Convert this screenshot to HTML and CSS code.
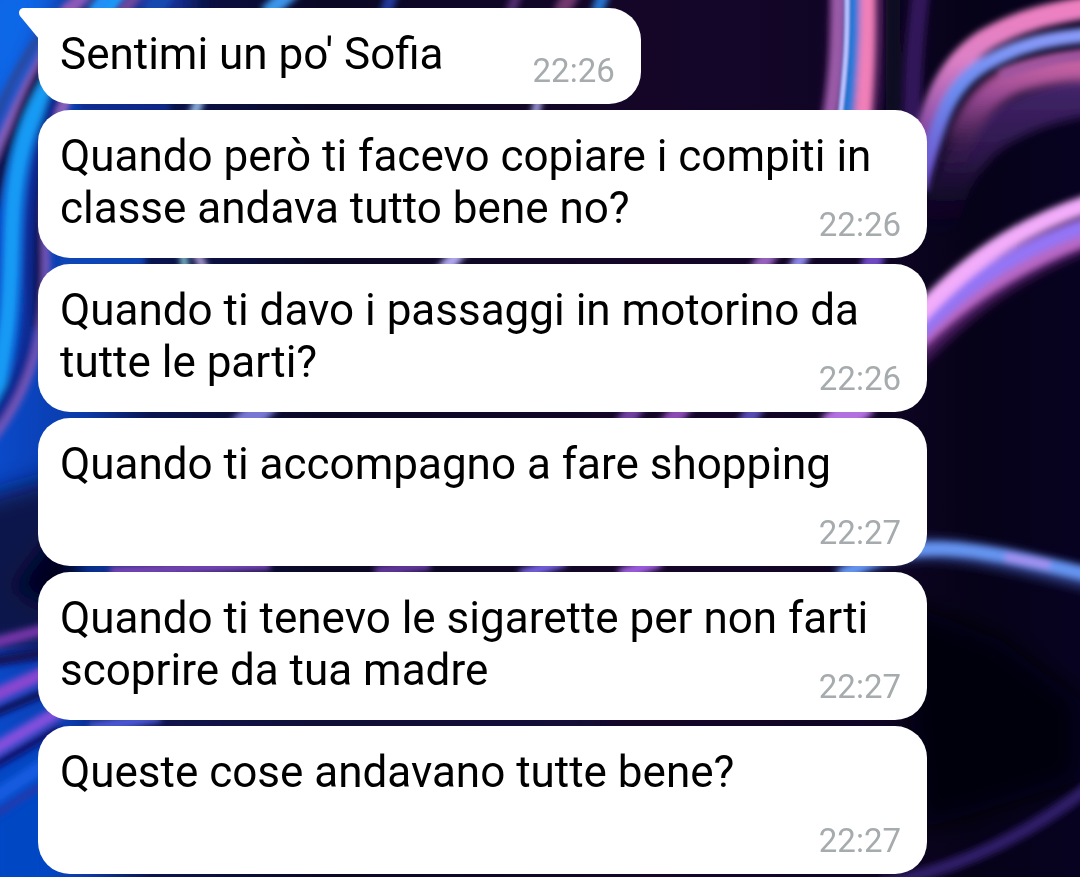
FILE: index.html
```html
<!DOCTYPE html>
<html lang="it">
<head>
  <meta charset="UTF-8">
  <meta name="viewport" content="width=device-width, initial-scale=1">
  <title>Chat</title>
  <link rel="stylesheet" href="styles.css">
</head>
<body>
<svg class="wallpaper" viewBox="0 0 1080 877" preserveAspectRatio="xMidYMid slice" aria-hidden="true">
  <defs>
    <linearGradient id="base" x1="0" y1="0" x2="1080" y2="0" gradientUnits="userSpaceOnUse">
      <stop offset="0" stop-color="#0a49c8"/>
      <stop offset="0.08" stop-color="#0b3aa8"/>
      <stop offset="0.14" stop-color="#0a1450"/>
      <stop offset="0.3" stop-color="#0a0824"/>
      <stop offset="0.6" stop-color="#150628"/>
      <stop offset="0.8" stop-color="#100526"/>
      <stop offset="0.9" stop-color="#060218"/>
      <stop offset="1" stop-color="#070220"/>
    </linearGradient>
    <linearGradient id="fadePink" x1="0" y1="60" x2="0" y2="175" gradientUnits="userSpaceOnUse">
      <stop offset="0" stop-color="#cc66a4"/>
      <stop offset="0.3" stop-color="#9a4a94"/>
      <stop offset="0.6" stop-color="#54285f"/>
      <stop offset="1" stop-color="#1c0c34" stop-opacity="0"/>
    </linearGradient>
    <linearGradient id="fadePurple" x1="0" y1="80" x2="0" y2="240" gradientUnits="userSpaceOnUse">
      <stop offset="0" stop-color="#43256c"/>
      <stop offset="0.5" stop-color="#2b1648"/>
      <stop offset="1" stop-color="#0c0520" stop-opacity="0"/>
    </linearGradient>
    <linearGradient id="fadeBlue" x1="0" y1="30" x2="0" y2="180" gradientUnits="userSpaceOnUse">
      <stop offset="0" stop-color="#8c9cfa"/>
      <stop offset="0.4" stop-color="#6b8cf0"/>
      <stop offset="1" stop-color="#7052cc"/>
    </linearGradient>
    <linearGradient id="fadeRose" x1="0" y1="0" x2="0" y2="150" gradientUnits="userSpaceOnUse">
      <stop offset="0" stop-color="#f080c0"/>
      <stop offset="0.4" stop-color="#dc80c6"/>
      <stop offset="1" stop-color="#6c3a98"/>
    </linearGradient>
    <filter id="soft" x="-200" y="-200" width="1500" height="1300" filterUnits="userSpaceOnUse">
      <feGaussianBlur stdDeviation="3"/>
    </filter>
    <filter id="softer" x="-200" y="-200" width="1500" height="1300" filterUnits="userSpaceOnUse">
      <feGaussianBlur stdDeviation="5"/>
    </filter>
    <filter id="wide" x="-200" y="-200" width="1500" height="1300" filterUnits="userSpaceOnUse">
      <feGaussianBlur stdDeviation="12"/>
    </filter>
  </defs>
  <rect x="-200" y="-200" width="1500" height="1300" fill="url(#base)"/>

  <!-- large shadows -->
  <g filter="url(#wide)">
    <path d="M-20 -20H60L20 80L-20 130Z" fill="#0768e8"/>
    <path d="M60 -20H190V20H60Z" fill="#1236a0"/>
    <path d="M-40 505L80 470V650H-40Z" fill="#07164c"/>
    <path d="M10 590L80 500V620Z" fill="#03021c"/>
    <path d="M90 715H600V732H90Z" fill="#0b1048"/>
    <path d="M-20 780L60 740V900H-20Z" fill="#0647c4"/>
    <path d="M900 600L1000 640L1080 700V780L920 830Z" fill="#010008"/>
  </g>

  <!-- left ribbons -->
  <g fill="none" filter="url(#soft)">
    <path d="M112 -20C70 40 20 70 -10 190" stroke="#16225f" stroke-width="14"/>
    <path d="M60 10C40 35 20 60 -10 130" stroke="#2c4a9c" stroke-width="8"/>
    <path d="M70 5C42 55 20 90 -8 160" stroke="#8b62bd" stroke-width="8"/>
    <path d="M80 10C30 75 8 130 -6 210" stroke="#0c0a4c" stroke-width="8"/>
    <path d="M130 -20C70 60 16 90 12 230C10 300 10 330 -8 410" stroke="#149bf5" stroke-width="17"/>
    <path d="M68 70C34 130 30 220 30 300C28 370 16 380 -6 420" stroke="#0b2a92" stroke-width="13"/>
    <path d="M70 90C38 150 36 220 38 330" stroke="#060a48" stroke-width="8"/>
    <path d="M66 100C48 140 44 200 46 262C46 340 30 390 -8 440" stroke="#7756b8" stroke-width="8"/>
    <path d="M-10 644L50 628" stroke="#7635a8" stroke-width="11"/>
    <path d="M-10 662L50 652" stroke="#160a50" stroke-width="9"/>
    <path d="M-10 698L60 666" stroke="#8846cf" stroke-width="14"/>
    <path d="M-10 715L60 686" stroke="#100a55" stroke-width="8"/>
    <path d="M-10 752L70 705" stroke="#8350dc" stroke-width="13"/>
    <path d="M-10 768L60 728" stroke="#0f0d6b" stroke-width="8"/>
    <path d="M-10 800L60 755" stroke="#185ce0" stroke-width="14"/>
    <path d="M-10 818L50 780" stroke="#2b37a8" stroke-width="6"/>
  </g>

  <!-- glints that pass under the bubbles -->
  <g fill="none" filter="url(#soft)">
    <path d="M92 -14L66 14" stroke="#8d5ab8" stroke-width="14"/>
    <path d="M116 -14L92 14" stroke="#2090f8" stroke-width="14"/>
    <path d="M144 -14L120 14" stroke="#6f4a9c" stroke-width="12"/>
    <path d="M170 -14L150 14" stroke="#1648b0" stroke-width="20"/>
    <path d="M298 -14L266 14" stroke="#3c94ea" stroke-width="16"/>
    <path d="M395 -14L385 14" stroke="#203b9c" stroke-width="12"/>
    <path d="M520 -14L510 14" stroke="#522d70" stroke-width="10"/>
    <path d="M576 -14L560 14" stroke="#70376f" stroke-width="16"/>
    <path d="M607 -14L596 14" stroke="#2775d0" stroke-width="12"/>
    <path d="M70 92L58 118" stroke="#8b62bd" stroke-width="8"/>
    <path d="M80 107H170" stroke="#0c2c90" stroke-width="10"/>
    <path d="M202 92L192 120" stroke="#8fb4e0" stroke-width="10"/>
    <path d="M540 92L534 120" stroke="#a8a4e8" stroke-width="8"/>
    <path d="M60 261H145" stroke="#0c46b8" stroke-width="12"/>
    <path d="M182 245L186 275" stroke="#86c8cf" stroke-width="7"/>
    <path d="M194 245L206 275" stroke="#a99ad0" stroke-width="9"/>
    <path d="M465 245L440 275" stroke="#b0a8f0" stroke-width="14"/>
    <path d="M775 245L755 275" stroke="#9560bd" stroke-width="17"/>
    <path d="M808 245L792 275" stroke="#8f88e8" stroke-width="14"/>
    <path d="M878 245L868 275" stroke="#6e4ac2" stroke-width="20"/>
    <path d="M270 400L238 430" stroke="#7878d4" stroke-width="24"/>
    <path d="M640 400L620 430" stroke="#7040a0" stroke-width="17"/>
    <path d="M688 400L664 430" stroke="#8c4bb4" stroke-width="18"/>
    <path d="M760 400L742 430" stroke="#564bb0" stroke-width="17"/>
    <path d="M865 400L830 430" stroke="#b370e0" stroke-width="30"/>
    <path d="M110 572L270 564" stroke="#7545b4" stroke-width="12"/>
    <path d="M375 572L430 564" stroke="#62389c" stroke-width="12"/>
    <path d="M520 576L565 560" stroke="#735fdc" stroke-width="12"/>
    <path d="M620 576L660 560" stroke="#9b5bdc" stroke-width="14"/>
    <path d="M90 730L160 715" stroke="#4857d0" stroke-width="14"/>
  </g>

  <!-- upright ribbon -->
  <path d="M858 -20C858 60 856 90 848 130" fill="none" stroke="#3c1850" stroke-width="56" filter="url(#softer)"/>
  <g fill="none" filter="url(#soft)">
    <path d="M838 -20C838 50 836 80 828 130" stroke="#9b5ba8" stroke-width="14"/>
    <path d="M867 -20C868 50 866 80 862 130" stroke="#f07fb8" stroke-width="17"/>
    <path d="M853 -20C854 50 850 80 846 130" stroke="#2878d8" stroke-width="14"/>
    <path d="M893 -20V130" stroke="#0a0820" stroke-width="14"/>
    <path d="M922 -20C914 50 912 80 912 130" stroke="#31195a" stroke-width="18"/>
  </g>
  <path class="edge" d="M847 -20C848 50 845 70 840 120" fill="none" stroke="#b4c0fc" stroke-width="5"/>

  <!-- top right arch -->
  <path d="M935 240C955 150 985 112 1110 92" fill="none" stroke="url(#fadePurple)" stroke-width="38" filter="url(#softer)"/>
  <path d="M945 190C960 120 985 90 1020 78C1050 69 1070 68 1110 66" fill="none" stroke="url(#fadePink)" stroke-width="28" filter="url(#softer)"/>
  <g fill="none" filter="url(#soft)">
    <path d="M1000 76C1030 64 1060 56 1110 52" stroke="#a055a0" stroke-width="10"/>
    <path d="M916 180C928 110 944 66 985 40C1020 20 1050 12 1110 4" stroke="url(#fadeRose)" stroke-width="22"/>
    <path d="M920 190C940 112 952 84 985 64C1020 44 1050 37 1110 33" stroke="url(#fadeBlue)" stroke-width="15"/>
  </g>

  <!-- middle right arch -->
  <path d="M900 365C960 300 1020 255 1110 226" fill="none" stroke="#4c1d60" stroke-width="34" filter="url(#softer)"/>
  <g fill="none" filter="url(#soft)">
    <path d="M900 360C955 302 1015 260 1110 228" stroke="#b767c4" stroke-width="18"/>
    <path d="M900 352C950 300 1000 250 1110 218" stroke="#9475f4" stroke-width="16"/>
    <path d="M900 336C950 280 1000 228 1110 197" stroke="#f2acfa" stroke-width="18"/>
  </g>

  <!-- lower right ribbons -->
  <path d="M840 575C910 532 960 548 1110 584" fill="none" stroke="#28306f" stroke-width="24" filter="url(#softer)"/>
  <g fill="none" filter="url(#soft)">
    <path d="M840 577C910 534 960 544 1110 580" stroke="#6594f0" stroke-width="14"/>
    <path d="M1005 557L1050 565" stroke="#a490f0" stroke-width="9"/>
    <path d="M880 884C960 870 1040 830 1110 770" stroke="#2f1f66" stroke-width="13"/>
  </g>
</svg>

<ul class="chat">
  <li class="bubble first">
    <svg class="tail" viewBox="0 0 20 32" aria-hidden="true">
      <path d="M20 0H5C0 0-1 5 1 8L20 31Z" fill="#fff"/>
    </svg>
    Sentimi un po' Sofia
    <time datetime="22:26">22:26</time>
  </li>
  <li class="bubble">
    Quando però ti facevo copiare i compiti in classe andava tutto bene no?
    <time datetime="22:26">22:26</time>
  </li>
  <li class="bubble">
    Quando ti davo i passaggi in motorino da tutte le parti?
    <time datetime="22:26">22:26</time>
  </li>
  <li class="bubble">
    Quando ti accompagno a fare shopping
    <time datetime="22:27">22:27</time>
  </li>
  <li class="bubble">
    Quando ti tenevo le sigarette per non farti scoprire da tua madre
    <time datetime="22:27">22:27</time>
  </li>
  <li class="bubble">
    Queste cose andavano tutte bene?
    <time datetime="22:27">22:27</time>
  </li>
</ul>
</body>
</html>
```
FILE: styles.css
```css
* {
  margin: 0;
  padding: 0;
  box-sizing: border-box;
}

body {
  background-color: #090318;
  color: #000;
  font-family: Roboto, "Liberation Sans", sans-serif;
  font-size: 44px;
  line-height: 52px;
}

ul {
  list-style: none;
}

.wallpaper {
  position: fixed;
  top: 0;
  left: 0;
  width: 100%;
  height: 100%;
  z-index: -1;
}

.wallpaper .edge {
  filter: blur(1px);
}

.chat {
  display: flex;
  flex-direction: column;
  align-items: flex-start;
  gap: 6px;
  padding: 8px 38px 3px;
}

.bubble {
  display: flow-root;
  max-width: 889px;
  padding: 20px 26px 14px 22px;
  border-radius: 32px;
  background-color: #fff;
}

.bubble.first {
  position: relative;
  border-top-left-radius: 0;
}

.tail {
  position: absolute;
  top: 0;
  left: -19px;
  width: 20px;
  height: 32px;
}

/* sits on the last line, drops below when there is no room */
.bubble time {
  float: right;
  margin: 24px 0 0 89px;
  color: #a6abad;
  font-size: 33px;
  line-height: 38px;
}
```
